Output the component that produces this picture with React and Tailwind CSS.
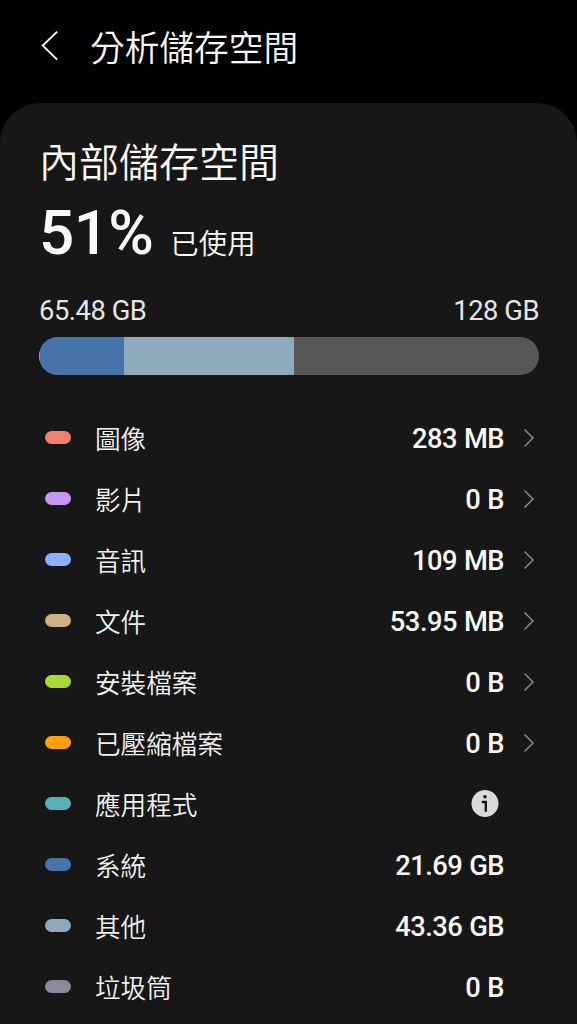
const categories = [
  { label: "圖像", size: "283 MB", color: "bg-[#f08074]", link: true },
  { label: "影片", size: "0 B", color: "bg-[#c697f0]", link: true },
  { label: "音訊", size: "109 MB", color: "bg-[#8ab1fb]", link: true },
  { label: "文件", size: "53.95 MB", color: "bg-[#ceb083]", link: true },
  { label: "安裝檔案", size: "0 B", color: "bg-[#a7d934]", link: true },
  { label: "已壓縮檔案", size: "0 B", color: "bg-[#ff9f0e]", link: true },
  { label: "應用程式", info: true, color: "bg-[#56b0b8]" },
  { label: "系統", size: "21.69 GB", color: "bg-[#4674aa]" },
  { label: "其他", size: "43.36 GB", color: "bg-[#8fa9bd]" },
  { label: "垃圾筒", size: "0 B", color: "bg-[#8a8a9b]" },
];

const BackIcon = () => (
  <svg className="h-8 w-5" viewBox="0 0 20 32" fill="none">
    <path d="M17.2 1.6L2.8 15.6L17.2 29.6" stroke="#f5f5f5" strokeWidth="2" />
  </svg>
);

const ChevronIcon = () => (
  <svg className="h-5 w-3" viewBox="0 0 12 20" fill="none">
    <path d="M1.5 1.6L10 10L1.5 18.4" stroke="#919191" strokeWidth="1.4" />
  </svg>
);

const InfoIcon = () => (
  <svg className="h-7 w-7" viewBox="0 0 28 28" fill="none">
    <circle cx="14" cy="13.5" r="13.5" fill="#dadada" />
    <circle cx="14" cy="6.8" r="1.8" fill="#171717" />
    <path d="M11.8 12H14.8V20.8" stroke="#171717" strokeWidth="2.4" strokeLinecap="round" />
  </svg>
);

const CategoryRow = ({ item }) => (
  <li className="flex h-[61px] items-center">
    <span className={`ml-[6px] h-[13px] w-[26px] rounded-full ${item.color}`} />
    <span className="ml-6 pt-[5px] text-[25.6px] leading-[38px] font-[350] text-[#f2f2f2]">
      {item.label}
    </span>
    {item.info ? (
      <span className="mr-[5px] ml-auto">
        <InfoIcon />
      </span>
    ) : (
      <span className="ml-auto pt-[3px] text-[27.3px] leading-[38px] font-medium tracking-[-0.5px] [word-spacing:0.6px] text-[#fafafa]">
        {item.size}
      </span>
    )}
    <span className="ml-[19px] w-4">{item.link && <ChevronIcon />}</span>
  </li>
);

export default function App() {
  return (
    <div className="flex h-screen flex-col overflow-hidden bg-black font-['Roboto','Noto_Sans_CJK_TC',sans-serif] text-[#fafafa]">
      <header className="flex h-[103px] shrink-0 items-start pt-5 pl-10">
        <div className="mt-[10px]">
          <BackIcon />
        </div>
        <h1 className="mt-[3px] ml-[30px] text-[34.7px] leading-[52px] font-[350]">
          分析儲存空間
        </h1>
      </header>

      <main className="flex-1 rounded-t-[40px] bg-[#171717] pt-[31px] pr-[38px] pl-[39px]">
        <h2 className="text-[40px] leading-[60px] font-[350]">內部儲存空間</h2>
        <div className="flex h-[79px] items-baseline">
          <span className="text-[62px] leading-[78px] font-medium tracking-[-0.6px]">
            51%
          </span>
          <span className="ml-[17px] text-[28.4px] font-[350]">已使用</span>
        </div>

        <div className="mt-[18px] flex justify-between text-[27.3px] leading-[40px] tracking-[-0.45px] text-[#e6e6e6]">
          <span>65.48 GB</span>
          <span>128 GB</span>
        </div>
        <div className="mt-[6px] flex h-[38px] overflow-hidden rounded-full bg-[#575757]">
          <div className="w-px bg-[#f08074]" />
          <div className="w-[84px] bg-[#4674aa]" />
          <div className="w-[170px] bg-[#8fa9bd]" />
        </div>

        <ul className="mt-8">
          {categories.map((item) => (
            <CategoryRow key={item.label} item={item} />
          ))}
        </ul>
      </main>
    </div>
  );
}
